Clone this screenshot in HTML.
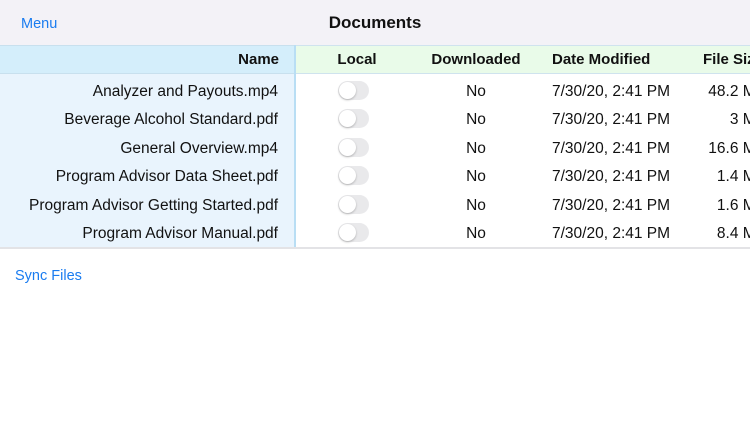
<!DOCTYPE html>
<html><head><style>
body{margin:0;width:750px;height:422px;overflow:hidden;background:#fff;font-family:"Liberation Sans",sans-serif;position:relative}
.nav{position:absolute;left:0;top:0;width:750px;height:45px;background:#f3f2f7}
.menu{position:absolute;left:21px;top:16px;font-size:14.5px;color:#1a7cf0}
.title{position:absolute;left:0;width:750px;top:13px;text-align:center;font-size:17px;font-weight:bold;color:#111}
.hdr{position:absolute;top:45px;height:29px;left:0;width:750px;background:#e9fbe9;border-top:1px solid #cfe3ee;border-bottom:1px solid #cfe3ee;box-sizing:border-box}
.hn{position:absolute;left:0;top:45px;width:294px;height:29px;background:#d4eefb;border-top:1px solid #c8e0ee;border-bottom:1px solid #c8e0ee;box-sizing:border-box}
.nb{position:absolute;left:0;top:74px;width:294px;height:174px;background:#e9f4fd}
.vl{position:absolute;left:294px;top:45px;width:2px;height:203px;background:#b9def4}
.bl{position:absolute;left:0;top:247px;width:750px;height:2px;background:#e3e3e6}
.t{position:absolute;font-size:15.5px;color:#111;white-space:nowrap}
.b{font-weight:bold;font-size:15px}
.r{text-align:right}
.c{text-align:center}
.sw{position:absolute;left:338px;width:31px;height:19px;border-radius:10px;background:#e9e9eb}
.sw::after{content:"";position:absolute;left:1px;top:1px;width:17px;height:17px;border-radius:50%;background:#fff;box-shadow:0 1px 2px rgba(0,0,0,.25)}
.sync{position:absolute;left:15px;top:268px;font-size:14.5px;color:#1a7cf0}
</style></head><body>
<div class="nav"><div class="menu">Menu</div><div class="title">Documents</div></div>
<div class="hdr"></div><div class="hn"></div><div class="nb"></div><div class="vl"></div><div class="bl"></div>
<div class="t b r" style="left:0;width:279px;top:51px">Name</div>
<div class="t b c" style="left:317px;width:80px;top:51px">Local</div>
<div class="t b c" style="left:416px;width:120px;top:51px">Downloaded</div>
<div class="t b" style="left:552px;top:51px">Date Modified</div>
<div class="t b" style="left:703px;top:51px">File Size</div>

<div class="t r" style="left:0;width:278px;top:83px">Analyzer and Payouts.mp4</div>
<div class="t r" style="left:0;width:278px;top:111px">Beverage Alcohol Standard.pdf</div>
<div class="t r" style="left:0;width:278px;top:140px">General Overview.mp4</div>
<div class="t r" style="left:0;width:278px;top:168px">Program Advisor Data Sheet.pdf</div>
<div class="t r" style="left:0;width:278px;top:197px">Program Advisor Getting Started.pdf</div>
<div class="t r" style="left:0;width:278px;top:225px">Program Advisor Manual.pdf</div>

<div class="sw" style="top:81px"></div><div class="sw" style="top:109px"></div><div class="sw" style="top:138px"></div>
<div class="sw" style="top:166px"></div><div class="sw" style="top:195px"></div><div class="sw" style="top:223px"></div>

<div class="t c" style="left:436px;width:80px;top:83px">No</div>
<div class="t c" style="left:436px;width:80px;top:111px">No</div>
<div class="t c" style="left:436px;width:80px;top:140px">No</div>
<div class="t c" style="left:436px;width:80px;top:168px">No</div>
<div class="t c" style="left:436px;width:80px;top:197px">No</div>
<div class="t c" style="left:436px;width:80px;top:225px">No</div>

<div class="t" style="left:552px;top:83px">7/30/20, 2:41 PM</div>
<div class="t" style="left:552px;top:111px">7/30/20, 2:41 PM</div>
<div class="t" style="left:552px;top:140px">7/30/20, 2:41 PM</div>
<div class="t" style="left:552px;top:168px">7/30/20, 2:41 PM</div>
<div class="t" style="left:552px;top:197px">7/30/20, 2:41 PM</div>
<div class="t" style="left:552px;top:225px">7/30/20, 2:41 PM</div>

<div class="t r" style="left:600px;width:166px;top:83px">48.2 MB</div>
<div class="t r" style="left:600px;width:166px;top:111px">3 MB</div>
<div class="t r" style="left:600px;width:166px;top:140px">16.6 MB</div>
<div class="t r" style="left:600px;width:166px;top:168px">1.4 MB</div>
<div class="t r" style="left:600px;width:166px;top:197px">1.6 MB</div>
<div class="t r" style="left:600px;width:166px;top:225px">8.4 MB</div>

<div class="sync">Sync Files</div>
</body></html>
